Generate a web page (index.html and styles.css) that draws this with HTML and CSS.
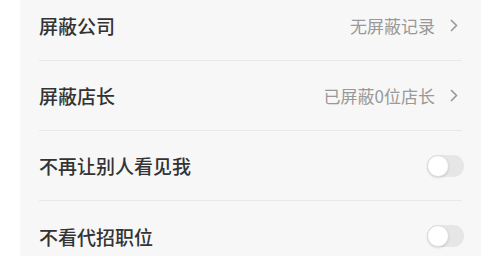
FILE: index.html
```html
<!DOCTYPE html>
<html lang="zh-CN">
<head>
    <meta charset="UTF-8">
    <meta name="viewport" content="width=device-width, initial-scale=1">
    <title>隐私设置</title>
    <link rel="stylesheet" href="styles.css">
</head>
<body>
<div class="panel">
    <div class="row">
        <span class="label">屏蔽公司</span>
        <span class="value">无屏蔽记录</span>
        <svg class="arrow" width="8" height="13" viewBox="0 0 8 13"><path d="M1 1l5.5 5.5L1 12" fill="none" stroke="#999" stroke-width="1.6"/></svg>
    </div>
    <div class="row">
        <span class="label">屏蔽店长</span>
        <span class="value">已屏蔽0位店长</span>
        <svg class="arrow" width="8" height="13" viewBox="0 0 8 13"><path d="M1 1l5.5 5.5L1 12" fill="none" stroke="#999" stroke-width="1.6"/></svg>
    </div>
    <div class="row">
        <span class="label">不再让别人看见我</span>
        <span class="switch"><span class="knob"></span></span>
    </div>
    <div class="row">
        <span class="label">不看代招职位</span>
        <span class="switch"><span class="knob"></span></span>
    </div>
</div>
</body>
</html>
```

FILE: styles.css
```css
* {
    font-family: "Noto Sans CJK SC", "Noto Sans", sans-serif;
    box-sizing: border-box;
}
body {
    margin: 0;
    background-color: #fff;
}
.panel {
    margin: -9px 19px 0 20px;
    padding: 0 19px;
    background-color: #f7f7f7;
}
.row {
    display: flex;
    align-items: center;
    height: 70px;
    border-bottom: 1px solid #e8e8e8;
}
.row:last-child {
    border-bottom: none;
}
.label {
    flex: 1;
    font-size: 19px;
    font-weight: 500;
    color: #333;
}
.value {
    font-size: 17px;
    color: #999;
}
.arrow {
    margin: 0 4px 0 15px;
}
.switch {
    position: relative;
    width: 37px;
    height: 22px;
    margin-right: -2px;
    border-radius: 11px;
    background-color: #e6e6e6;
}
.knob {
    position: absolute;
    left: 0;
    top: 0;
    width: 22px;
    height: 22px;
    border-radius: 50%;
    background-color: #fff;
    border: 1px solid #ddd;
    box-shadow: 0 1px 2px rgba(0, 0, 0, 0.12);
}
```
